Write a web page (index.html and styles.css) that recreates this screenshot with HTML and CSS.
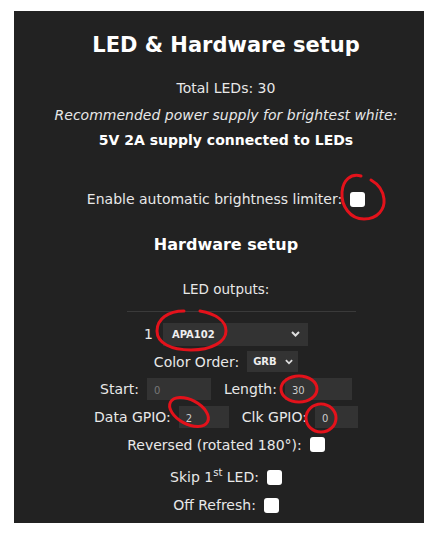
FILE: index.html
```html
<!DOCTYPE html>
<html lang="en">
<head>
  <meta charset="UTF-8">
  <title>LED Settings</title>
  <link rel="stylesheet" href="styles.css">
</head>
<body>
  <div class="panel">
    <h2>LED &amp; Hardware setup</h2>
    <p class="line">Total LEDs: 30</p>
    <p class="line psu"><i>Recommended power supply for brightest white:</i></p>
    <p class="line"><b>5V 2A supply connected to LEDs</b></p>

    <div class="row enable"><span>Enable automatic brightness limiter:</span> <input type="checkbox" class="cb"></div>

    <h3>Hardware setup</h3>
    <div class="line outputs">LED outputs:</div>
    <hr>

    <div class="row first"><span>1</span> <span class="sel sel-type"><span>APA102</span>
      <svg width="9" height="6" viewBox="0 0 9 6"><path d="M1 1l3.5 3.5L8 1" fill="none" stroke="#ddd" stroke-width="2"/></svg></span></div>
    <div class="row"><span>Color Order:</span> <span class="sel sel-co"><span>GRB</span>
      <svg width="8" height="6" viewBox="0 0 9 6"><path d="M1 1l3.5 3.5L8 1" fill="none" stroke="#ddd" stroke-width="2"/></svg></span></div>
    <div class="row"><span>Start:</span> <input class="num w-start" value="0"> <span class="gap">Length:</span> <input class="num w-len" value="30"></div>
    <div class="row"><span>Data GPIO:</span> <input class="num w-data" value="2"> <span class="gap">Clk GPIO:</span> <input class="num w-clk" value="0"></div>
    <div class="row"><span>Reversed (rotated 180°):</span> <input type="checkbox" class="cb"></div>
    <div class="row skip"><span>Skip 1<sup>st</sup> LED:</span> <input type="checkbox" class="cb"></div>
    <div class="row"><span>Off Refresh:</span> <input type="checkbox" class="cb"></div>

    <!-- hand-drawn marks on the screenshot -->
    <svg class="marks" viewBox="14 11 410 512" width="410" height="512">
      <g fill="none" stroke="#e3121b" stroke-width="3" stroke-linecap="round">
        <path d="M361 176c-10-3-18 4-19 16c-1 14 8 27 22 27c14 0 21-10 20-20c-1-9-6-15-13-19"/>
        <path d="M184 311c-16 0-27 8-27 20c0 12 14 19 34 19c20 0 35-8 35-19c0-10-10-17-26-20"/>
        <ellipse cx="299" cy="389" rx="18" ry="13"/>
        <ellipse cx="321" cy="418" rx="15" ry="14"/>
        <ellipse cx="189" cy="412" rx="21" ry="12" transform="rotate(28 189 412)"/>
      </g>
    </svg>
  </div>
</body>
</html>
```

FILE: styles.css
```css
body {
  margin: 0;
  padding: 11px 11px 0 14px;
  background-color: #fff;
  font-family: 'DejaVu Sans', Verdana, sans-serif;
}

.panel {
  position: relative;
  width: 396px;
  height: 492px;
  padding: 20px 0 0 14px;
  background-color: #222;
  color: #e8e8e8;
  text-align: center;
  font-size: 14px;
}

h2 {
  margin: 0 0 16.5px;
  font-size: 21px;
  line-height: 28px;
  color: #fff;
}

h3 {
  margin: 19px 0 0;
  font-size: 16px;
  line-height: 25px;
  color: #fff;
}

.line {
  margin: 0;
  line-height: 25px;
}

.psu {
  margin-top: 2px;
}

.line b {
  color: #fff;
}

.enable {
  height: 25px;
  margin-top: 33px;
}

.outputs {
  margin-top: 20px;
  font-size: 13.5px;
}

hr {
  width: 229px;
  margin: 9px 0 0 99px;
  border: 0;
  border-top: 1px solid #3a3a3a;
}

.row {
  height: 27.7px;
  display: flex;
  align-items: center;
  justify-content: center;
  gap: 8px;
}

.first {
  margin-top: 8px;
  gap: 10px;
}

.skip {
  margin-top: 5px;
}

.gap {
  margin-left: 5px;
}

sup {
  font-size: 10px;
  line-height: 0;
}

.cb {
  appearance: none;
  width: 15px;
  height: 15px;
  margin: 0;
  background-color: #fff;
  border-radius: 3px;
}

.sel {
  display: inline-flex;
  align-items: center;
  justify-content: space-between;
  background-color: #333;
  color: #eee;
  font-size: 10px;
  font-weight: bold;
  box-sizing: border-box;
}

.sel-type {
  width: 145px;
  height: 23px;
  padding: 0 8px 0 9px;
}

.sel-co {
  width: 51px;
  height: 21px;
  padding: 0 5px 0 6px;
}

.num {
  height: 22px;
  box-sizing: border-box;
  border: 0;
  padding: 2px 0 0 7px;
  background-color: #333;
  color: #ccc;
  font-family: inherit;
  font-size: 10px;
}

.w-start { width: 64px; color: #777; }
.w-len { width: 67px; }
.w-data { width: 50px; }
.w-clk { width: 43px; }

.marks {
  position: absolute;
  left: 0;
  top: 0;
}
```
